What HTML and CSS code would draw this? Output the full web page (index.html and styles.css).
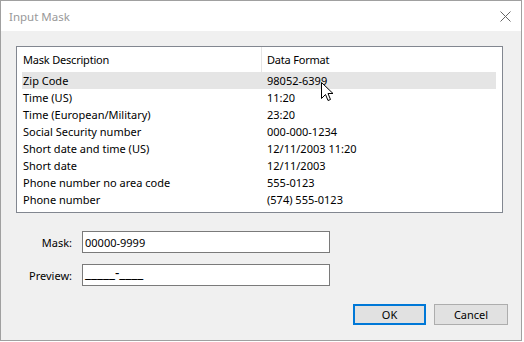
FILE: index.html
```html
<!DOCTYPE html>
<html>
<head>
<meta charset="utf-8">
<link rel="stylesheet" href="styles.css">
</head>
<body>
<div class="dialog">
  <div class="titlebar">
    <span class="title">Input Mask</span>
    <svg class="close" width="11" height="11" viewBox="0 0 11 11"><path d="M0.5 0.5 L10.5 10.5 M10.5 0.5 L0.5 10.5" stroke="#666" stroke-width="1" fill="none"/></svg>
  </div>
  <div class="body">
    <div class="list">
      <div class="header">
        <div class="hcol c1">Mask Description</div>
        <div class="hcol c2">Data Format</div>
      </div>
      <div class="rows">
        <div class="row sel"><span class="c1">Zip Code</span><span class="c2">98052-6399</span></div>
        <div class="row"><span class="c1">Time (US)</span><span class="c2">11:20</span></div>
        <div class="row"><span class="c1">Time (European/Military)</span><span class="c2">23:20</span></div>
        <div class="row"><span class="c1">Social Security number</span><span class="c2">000-000-1234</span></div>
        <div class="row"><span class="c1">Short date and time (US)</span><span class="c2">12/11/2003 11:20</span></div>
        <div class="row"><span class="c1">Short date</span><span class="c2">12/11/2003</span></div>
        <div class="row"><span class="c1">Phone number no area code</span><span class="c2">555-0123</span></div>
        <div class="row"><span class="c1">Phone number</span><span class="c2">(574) 555-0123</span></div>
      </div>
      <svg class="cursor" width="13" height="20" viewBox="0 0 13 20"><path d="M0.5 0.5 L0.5 16.5 L4.5 12.5 L7 18.5 L9.5 17.5 L7 11.5 L12 11.5 Z" fill="#fff" stroke="#000" stroke-width="1" stroke-linejoin="miter"/></svg>
    </div>
    <div class="form">
      <div class="field"><label class="lbl">Mask:</label><div class="input">00000-9999</div></div>
      <div class="field"><label class="lbl">Preview:</label><div class="input"><span class="preview">_____-____</span></div></div>
    </div>
    <div class="buttons">
      <div class="btn default">OK</div>
      <div class="btn">Cancel</div>
    </div>
  </div>
</div>
</body>
</html>
```
FILE: styles.css
```css
html, body {
  margin: 0;
  padding: 0;
  background: #ffffff;
}
body {
  font-family: "Noto Sans", "Open Sans", sans-serif;
  font-size: 11px;
  color: #000;
}
.dialog {
  width: 520px;
  height: 339px;
  border: 1px solid #a0a0a0;
  background: #f0f0f0;
  display: flex;
  flex-direction: column;
}
.titlebar {
  height: 30px;
  background: #ffffff;
  display: flex;
  align-items: center;
  justify-content: space-between;
  padding: 0 8px 0 8px;
}
.title {
  color: #999999;
  font-size: 11.5px;
  line-height: 1;
  margin-top: 1px;
}
.close {
  margin-right: 2px;
}
.body {
  flex: 1;
  display: flex;
  flex-direction: column;
  padding: 15px 0 0 15px;
}
.list {
  position: relative;
  width: 485px;
  height: 165px;
  border: 1px solid #828790;
  background: #ffffff;
}
.header {
  height: 25px;
  display: flex;
}
.hcol {
  display: flex;
  align-items: center;
  line-height: 1;
}
.hcol.c1 {
  width: 238px;
  padding-left: 6px;
  border-right: 1px solid #e5e5e5;
  letter-spacing: -0.2px;
}
.hcol.c2 {
  padding-left: 5px;
  letter-spacing: -0.2px;
}
.rows {
  padding-left: 5px;
}
.row {
  height: 17px;
  display: flex;
  align-items: center;
  line-height: 1;
  width: 474px;
}
.row.sel {
  background: #e5e5e5;
}
.row .c1 {
  width: 239px;
  padding-left: 1px;
}
.row .c2 {
  padding-left: 5px;
}
.cursor {
  position: absolute;
  left: 304px;
  top: 35px;
}
.form {
  margin-top: 18px;
  display: flex;
  flex-direction: column;
  gap: 11px;
}
.field {
  display: flex;
  align-items: center;
}
.lbl {
  width: 56px;
  text-align: right;
  margin-right: 10px;
}
.input {
  width: 244px;
  height: 20px;
  border: 1px solid #7a7a7a;
  background: #fff;
  display: flex;
  align-items: center;
  padding-left: 2px;
  line-height: 1;
}
.preview {
  font-size: 13.5px;
  margin-top: -2px;
}
.buttons {
  display: flex;
  gap: 8px;
  margin-top: 18px;
  margin-left: 337px;
}
.btn {
  width: 72px;
  height: 19px;
  border: 1px solid #adadad;
  background: #e1e1e1;
  display: flex;
  align-items: center;
  justify-content: center;
  line-height: 1;
}
.btn.default {
  width: 69px;
  height: 17px;
  border: 2px solid #0078d7;
}
```
